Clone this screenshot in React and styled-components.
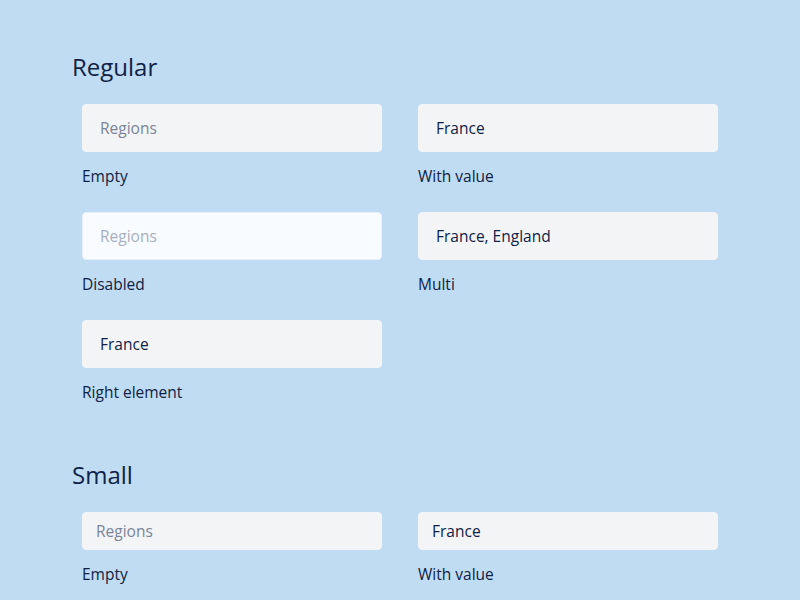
import React from "react";
import styled, { createGlobalStyle } from "styled-components";

const GlobalStyle = createGlobalStyle`
	html, body {
		margin: 0;
		padding: 0;
		background: #c0dcf2;
	}
	body {
		font-family: "Open Sans", "Noto Sans", sans-serif;
		color: #0f2246;
	}
`;

const Page = styled.div`
	padding: 51px 0 0 72px;
	display: flex;
	flex-direction: column;
	gap: 56px;
`;

const Section = styled.section`
	display: flex;
	flex-direction: column;
	gap: 21px;
`;

const Heading = styled.h2`
	margin: 0;
	font-size: 24px;
	line-height: 32px;
	font-weight: 400;
	color: #0f2246;
`;

const Grid = styled.div`
	padding-left: 10px;
	display: grid;
	grid-template-columns: 300px 300px;
	column-gap: 36px;
	row-gap: 25px;
`;

const Field = styled.div`
	display: flex;
	flex-direction: column;
`;

const Box = styled.div`
	box-sizing: border-box;
	height: ${(p) => (p.$small ? "38px" : "48px")};
	padding: 0 ${(p) => (p.$small ? "13px" : "17px")};
	display: flex;
	align-items: center;
	border-radius: 4px;
	font-size: 15.5px;
	background: ${(p) => (p.$disabled ? "#f8fbff" : "#f3f4f6")};
	border: 1px solid ${(p) => (p.$disabled ? "#e9eff6" : "#f3f4f6")};
	color: ${(p) =>
		p.$placeholder ? (p.$disabled ? "#a7b0c0" : "#7b8498") : "#0f2246"};
`;

const Caption = styled.span`
	margin-top: 13px;
	font-size: 15.5px;
	line-height: 22px;
	color: #0f2246;
`;

function SelectField({ value, label, disabled, small }) {
	return (
		<Field>
			<Box $small={small} $disabled={disabled} $placeholder={!value}>
				{value || "Regions"}
			</Box>
			<Caption>{label}</Caption>
		</Field>
	);
}

export default function App() {
	return (
		<>
			<GlobalStyle />
			<Page>
				<Section>
					<Heading>Regular</Heading>
					<Grid>
						<SelectField label="Empty" />
						<SelectField label="With value" value="France" />
						<SelectField label="Disabled" disabled />
						<SelectField label="Multi" value="France, England" />
						<SelectField label="Right element" value="France" />
					</Grid>
				</Section>
				<Section>
					<Heading>Small</Heading>
					<Grid>
						<SelectField small label="Empty" />
						<SelectField small label="With value" value="France" />
					</Grid>
				</Section>
			</Page>
		</>
	);
}
